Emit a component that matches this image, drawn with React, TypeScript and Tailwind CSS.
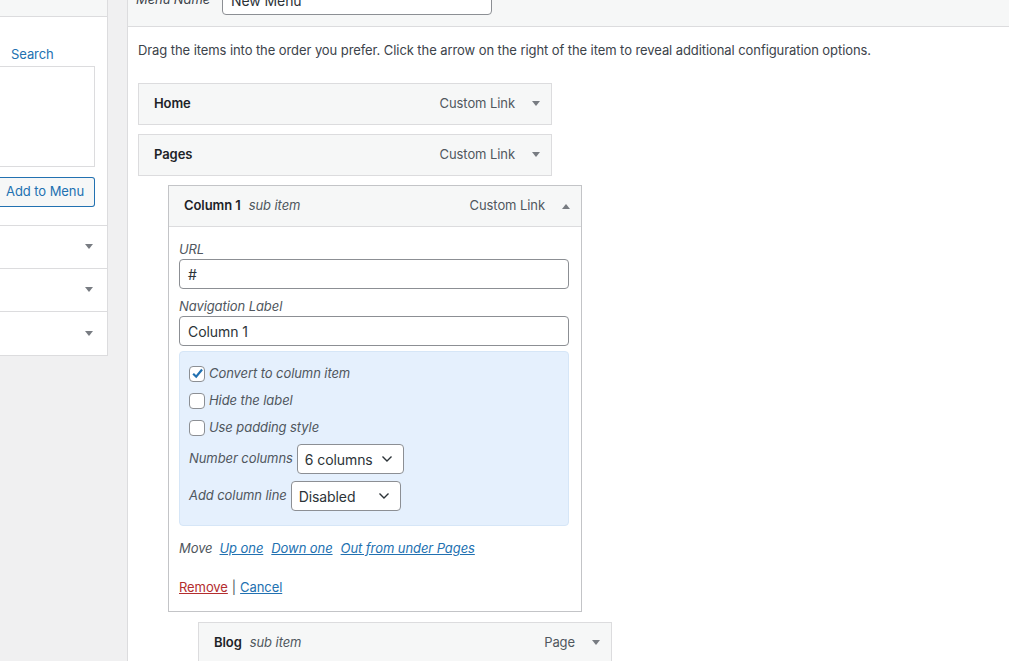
import React from "react";

const font = { fontFamily: "Inter, 'Noto Sans', sans-serif" };

function Tri({ up = false }: { up?: boolean }) {
  return (
    <svg width="10" height="6" viewBox="0 0 10 6" className="block">
      {up ? (
        <polygon points="1,6 9,6 5,1" fill="#787c82" />
      ) : (
        <polygon points="1,0 9,0 5,5" fill="#787c82" />
      )}
    </svg>
  );
}

function Chevron() {
  return (
    <svg width="12" height="8" viewBox="0 0 12 8" className="block">
      <path d="M1.5 1.5 L6 6 L10.5 1.5" stroke="#2c3338" strokeWidth="1.4" fill="none" />
    </svg>
  );
}

function ItemBar({
  title,
  sub,
  type,
  up = false,
}: {
  title: string;
  sub?: string;
  type: string;
  up?: boolean;
}) {
  return (
    <div className="h-[40px] flex items-center pl-[15px] pr-[10px] bg-[#f6f7f7]">
      <span className="font-semibold text-[#1d2327] text-[13px]">{title}</span>
      {sub && <span className="italic text-[#50575e] text-[13px] ml-[8px]">{sub}</span>}
      <span className="ml-auto text-[#50575e] text-[13px]">{type}</span>
      <span className="ml-[16px] w-[10px] flex justify-center">
        <Tri up={up} />
      </span>
    </div>
  );
}

function Check({ checked = false, label }: { checked?: boolean; label: string }) {
  return (
    <div className="h-[19px] flex items-center">
      <span className="w-[16px] h-[16px] rounded-[4px] border border-[#8c8f94] bg-white flex items-center justify-center">
        {checked && (
          <svg width="13" height="13" viewBox="0 0 12 12">
            <path d="M2 6.2 L4.8 9 L10.2 2.3" stroke="#2271b1" strokeWidth="2" fill="none" />
          </svg>
        )}
      </span>
      <span className="ml-[4px] italic text-[13px] text-[#50575e]">{label}</span>
    </div>
  );
}

function Select({ value, w }: { value: string; w: string }) {
  return (
    <div
      className={`${w} h-[30px] border border-[#8c8f94] rounded-[4px] bg-white flex items-center pl-[7px] pr-[10px] text-[14px] text-[#2c3338]`}
    >
      <span>{value}</span>
      <span className="ml-auto">
        <Chevron />
      </span>
    </div>
  );
}

export default function App() {
  return (
    <div
      className="w-[1009px] h-[661px] overflow-hidden bg-[#f0f0f1] flex items-start text-[13px] text-[#3c434a] tracking-[-0.08px]"
      style={font}
    >
      {/* Left panel */}
      <div className="w-[108px] shrink-0 bg-white border-r border-[#dcdcde] border-b">
        <div className="h-[17px] bg-[#f6f7f7] border-b border-[#dcdcde]" />
        <div className="pt-[28px] pl-[11px] text-[#2271b1] leading-[18px]">Search</div>
        <div className="mt-[3px] w-[95px] h-[101px] border border-[#dcdcde] border-l-0 bg-white" />
        <div className="mt-[10px] w-[95px] h-[30px] border border-[#2271b1] border-l-0 rounded-r-[3px] bg-[#f6f7f7] text-[#2271b1] flex items-center justify-end pr-[10px] text-[13px]">
          Add to Menu
        </div>
        <div className="mt-[18px] border-t border-[#dcdcde]">
          {[0, 1, 2].map((i) => (
            <div
              key={i}
              className={`h-[43px] flex items-center justify-end pr-[13px] ${
                i < 2 ? "border-b border-[#dcdcde]" : ""
              }`}
            >
              <Tri />
            </div>
          ))}
        </div>
      </div>

      {/* Main panel */}
      <div className="ml-[19px] flex-1 h-[661px] bg-white border-l border-[#dcdcde]">
        <div className="h-[27px] bg-[#f6f7f7] border-b border-[#dcdcde] overflow-hidden flex items-end pb-[11px] pl-[8px]">
          <div className="flex items-center">
            <span className="italic text-[#3c434a] text-[13px] w-[86px]">Menu Name</span>
            <div className="w-[270px] h-[30px] border border-[#8c8f94] rounded-[4px] bg-white flex items-center pl-[8px] text-[14px] text-[#2c3338]">
              New Menu
            </div>
          </div>
        </div>

        <div className="pl-[10px]">
          <p className="pt-[13px] leading-[20px] text-[#3c434a]">
            Drag the items into the order you prefer. Click the arrow on the right of the item to reveal additional configuration options.
          </p>

          <div className="mt-[23px] flex flex-col">
            <div className="w-[414px] border border-[#dcdcde]">
              <ItemBar title="Home" type="Custom Link" />
            </div>
            <div className="mt-[9px] w-[414px] border border-[#dcdcde]">
              <ItemBar title="Pages" type="Custom Link" />
            </div>

            <div className="mt-[9px] ml-[30px] w-[414px] border border-[#c3c4c7] bg-white">
              <div className="border-b border-[#dcdcde]">
                <ItemBar title="Column 1" sub="sub item" type="Custom Link" up />
              </div>
              <div className="pl-[10px] pr-[12px] pt-[13px] pb-[15px]">
                <div className="italic text-[#50575e] leading-[18px]">URL</div>
                <div className="mt-[1px] h-[30px] border border-[#8c8f94] rounded-[4px] flex items-center pl-[8px] text-[14px] text-[#2c3338]">
                  #
                </div>
                <div className="mt-[8px] italic text-[#50575e] leading-[18px]">Navigation Label</div>
                <div className="mt-[1px] h-[30px] border border-[#8c8f94] rounded-[4px] flex items-center pl-[8px] text-[14px] text-[#2c3338]">
                  Column 1
                </div>

                <div className="mt-[5px] h-[175px] rounded-[4px] bg-[#e5f0fd] border border-[#d6e6f7] pt-[12px] px-[9px] flex flex-col">
                  <Check checked label="Convert to column item" />
                  <div className="mt-[8px]">
                    <Check label="Hide the label" />
                  </div>
                  <div className="mt-[8px]">
                    <Check label="Use padding style" />
                  </div>
                  <div className="mt-[7px] flex items-center">
                    <span className="italic text-[#50575e] mr-[4px]">Number columns</span>
                    <Select value="6 columns" w="w-[107px]" />
                  </div>
                  <div className="mt-[7px] flex items-center">
                    <span className="italic text-[#50575e] mr-[4px]">Add column line</span>
                    <Select value="Disabled" w="w-[110px]" />
                  </div>
                </div>

                <div className="mt-[13px] leading-[18px] italic flex">
                  <span className="text-[#50575e]">Move</span>
                  <a className="ml-[7px] text-[#2271b1] underline">Up one</a>
                  <a className="ml-[8px] text-[#2271b1] underline">Down one</a>
                  <a className="ml-[8px] text-[#2271b1] underline">Out from under Pages</a>
                </div>

                <div className="mt-[21px] leading-[18px] flex">
                  <a className="text-[#b32d2e] underline">Remove</a>
                  <span className="mx-[4px] text-[#50575e]">|</span>
                  <a className="text-[#2271b1] underline">Cancel</a>
                </div>
              </div>
            </div>

            <div className="mt-[10px] ml-[60px] w-[414px] border border-[#dcdcde]">
              <ItemBar title="Blog" sub="sub item" type="Page" />
            </div>
          </div>
        </div>
      </div>
    </div>
  );
}
